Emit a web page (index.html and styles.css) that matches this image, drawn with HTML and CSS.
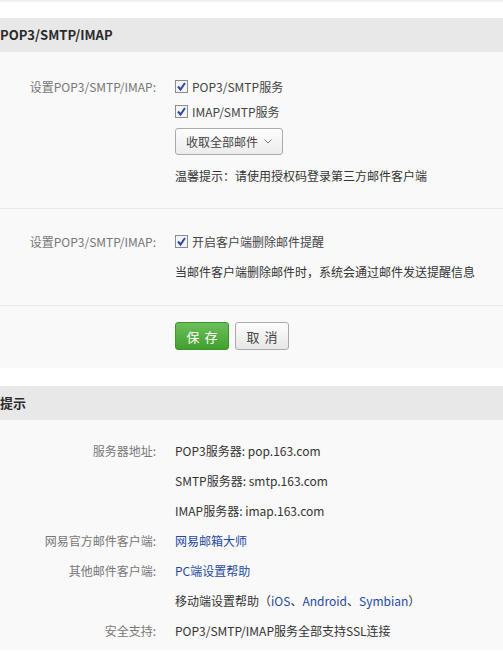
FILE: index.html
```html
<!DOCTYPE html>
<html lang="zh-CN">
<head>
<meta charset="utf-8">
<title>POP3/SMTP/IMAP</title>
<link rel="stylesheet" href="styles.css">
</head>
<body>
<div class="topline"></div>
<div class="panel">
  <div class="hd">POP3/SMTP/IMAP</div>
  <div class="bd">
    <div class="group g1">
      <div class="row">
        <div class="label">设置POP3/SMTP/IMAP:</div>
        <div class="field">
          <div class="line"><span class="cb"><svg viewBox="0 0 13 13" width="13" height="13"><rect x="0.5" y="0.5" width="12" height="12" fill="#f4f4f4" stroke="#8c8c8c"/><path d="M3 6.5 L5.5 9.5 L10 3" fill="none" stroke="#2c49a8" stroke-width="2"/></svg></span>POP3/SMTP服务</div>
          <div class="line"><span class="cb"><svg viewBox="0 0 13 13" width="13" height="13"><rect x="0.5" y="0.5" width="12" height="12" fill="#f4f4f4" stroke="#8c8c8c"/><path d="M3 6.5 L5.5 9.5 L10 3" fill="none" stroke="#2c49a8" stroke-width="2"/></svg></span>IMAP/SMTP服务</div>
          <div class="dropwrap"><span class="drop">收取全部邮件<svg class="chev" viewBox="0 0 8 5" width="8" height="5"><path d="M0.5 0.5 L4 4 L7.5 0.5" fill="none" stroke="#777" stroke-width="1"/></svg></span></div>
          <div class="line tip">温馨提示：请使用授权码登录第三方邮件客户端</div>
        </div>
      </div>
    </div>
    <div class="group g2">
      <div class="row">
        <div class="label">设置POP3/SMTP/IMAP:</div>
        <div class="field">
          <div class="line"><span class="cb"><svg viewBox="0 0 13 13" width="13" height="13"><rect x="0.5" y="0.5" width="12" height="12" fill="#f4f4f4" stroke="#8c8c8c"/><path d="M3 6.5 L5.5 9.5 L10 3" fill="none" stroke="#2c49a8" stroke-width="2"/></svg></span>开启客户端删除邮件提醒</div>
          <div class="line desc">当邮件客户端删除邮件时，系统会通过邮件发送提醒信息</div>
        </div>
      </div>
    </div>
    <div class="group g3">
      <div class="row">
        <div class="label"></div>
        <div class="field btns">
          <span class="btn save">保存</span>
          <span class="btn cancel">取消</span>
        </div>
      </div>
    </div>
  </div>
</div>
<div class="panel second">
  <div class="hd">提示</div>
  <div class="bd tips">
    <div class="trow"><div class="label">服务器地址:</div><div class="field">POP3服务器: pop.163.com</div></div>
    <div class="trow"><div class="label"></div><div class="field">SMTP服务器: smtp.163.com</div></div>
    <div class="trow"><div class="label"></div><div class="field">IMAP服务器: imap.163.com</div></div>
    <div class="trow"><div class="label">网易官方邮件客户端:</div><div class="field"><a class="lnk">网易邮箱大师</a></div></div>
    <div class="trow"><div class="label">其他邮件客户端:</div><div class="field"><a class="lnk">PC端设置帮助</a></div></div>
    <div class="trow"><div class="label"></div><div class="field">移动端设置帮助（<a class="lnk">iOS</a>、<a class="lnk">Android</a>、<a class="lnk">Symbian</a>）</div></div>
    <div class="trow"><div class="label">安全支持:</div><div class="field">POP3/SMTP/IMAP服务全部支持SSL连接</div></div>
  </div>
</div>
</body>
</html>
```
FILE: styles.css
```css
html, body {
  margin: 0;
  padding: 0;
  background: #fff;
}
body {
  font-family: "Noto Sans CJK SC", "Noto Sans", "DejaVu Sans", sans-serif;
  font-size: 12px;
  color: #444;
}
.topline {
  height: 2px;
  background: #f1f1f1;
}
.panel {
  margin-top: 16px;
}
.panel.second {
  margin-top: 18px;
}
.hd {
  height: 34px;
  line-height: 34px;
  background: #e8e8e8;
  font-weight: bold;
  font-size: 13px;
  color: #2b2b2b;
}
.bd {
  background: #f9f9f9;
}
.group {
  border-bottom: 1px solid #e8e8e8;
}
.group.g3 {
  border-bottom: none;
}
.g1 { padding: 22px 0 20px; }
.g2 { padding: 20px 0 21px; }
.g3 { padding: 16px 0 18px; }
.row {
  display: flex;
  align-items: flex-start;
}
.label {
  width: 156px;
  flex: none;
  text-align: right;
  color: #777;
  line-height: 25px;
}
.field {
  margin-left: 19px;
  flex: 1;
}
.line {
  line-height: 25px;
  display: flex;
  align-items: center;
  height: 25px;
}
.cb {
  display: inline-flex;
  width: 13px;
  height: 13px;
  margin-right: 4px;
}
.cb svg { display: block; }
.dropwrap {
  margin-top: 4px;
  height: 27px;
}
.drop {
  display: inline-flex;
  align-items: center;
  box-sizing: border-box;
  height: 27px;
  width: 108px;
  padding-left: 10px;
  border: 1px solid #aaa;
  border-radius: 3px;
  background: linear-gradient(#fdfdfd, #ececec);
  color: #444;
}
.chev {
  margin-left: 6px;
}
.tip {
  margin-top: 8px;
  color: #333;
}
.desc {
  margin-top: 5px;
  color: #333;
}
.btns {
  display: flex;
  gap: 6px;
}
.btn {
  display: inline-flex;
  align-items: center;
  justify-content: center;
  box-sizing: border-box;
  width: 54px;
  height: 28px;
  border-radius: 3px;
  font-size: 13px;
  letter-spacing: 5px;
  padding-left: 5px;
}
.save {
  background: linear-gradient(#6cbf5c, #42a02c);
  border: 1px solid #3e9429;
  color: #fff;
}
.cancel {
  background: linear-gradient(#fefefe, #e6e6e6);
  border: 1px solid #aaa;
  color: #444;
}
.tips {
  padding: 16px 0 4px;
}
.trow {
  display: flex;
  height: 30px;
  line-height: 30px;
}
.trow .label {
  line-height: 30px;
}
.trow .field {
  color: #333;
}
.lnk {
  color: #1f48a0;
  text-decoration: none;
}
```
